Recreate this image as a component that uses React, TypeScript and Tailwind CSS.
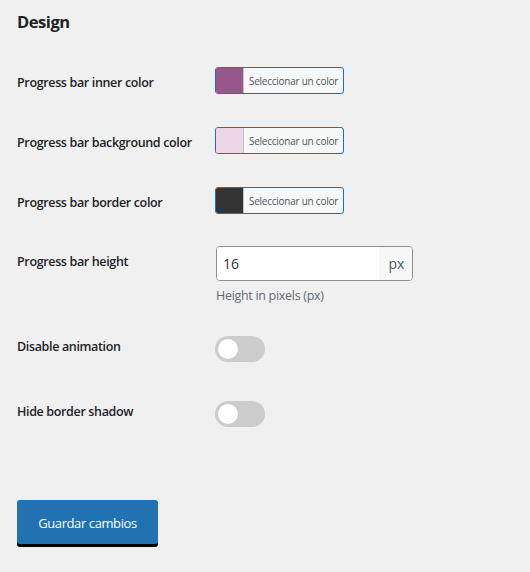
import React from "react";

const font = { fontFamily: '"Open Sans", "Noto Sans", sans-serif' };

function ColorButton({ color }: { color: string }) {
  return (
    <div className="flex h-[27px] w-[129px] overflow-hidden rounded-[3px] border border-[#2271b1] bg-[#f6f7f7]">
      <div className="h-full w-[27px] shrink-0" style={{ backgroundColor: color }} />
      <div className="flex h-full flex-1 items-center border-l border-[#c3c4c7] pl-[5px] text-[10px] leading-none tracking-[-0.25px] text-[#50575e] whitespace-nowrap">
        Seleccionar un color
      </div>
    </div>
  );
}

function Toggle() {
  return (
    <div className="relative h-[26px] w-[50px] rounded-full bg-[#cccccc]">
      <div className="absolute left-[3px] top-[3px] h-[20px] w-[20px] rounded-full bg-white" />
    </div>
  );
}

function Label({ children, pad }: { children: React.ReactNode; pad: string }) {
  return (
    <div className={`w-[198px] shrink-0 text-[12.5px] font-semibold leading-[18px] tracking-[-0.35px] text-[#1d2327] ${pad}`}>
      {children}
    </div>
  );
}

export default function App() {
  return (
    <div className="min-h-[572px] bg-[#f0f0f1] pl-[17px] pt-[12px]" style={font}>
      <h2 className="h-[20px] text-[16.5px] font-bold leading-[20px] tracking-[-0.45px] text-[#1d2327]">Design</h2>

      <div className="mt-[35px] flex h-[60px] items-start">
        <Label pad="pt-[7px]">Progress bar inner color</Label>
        <ColorButton color="#96588a" />
      </div>
      <div className="flex h-[60px] items-start">
        <Label pad="pt-[7px]">Progress bar background color</Label>
        <ColorButton color="#ebd5e6" />
      </div>
      <div className="flex h-[59px] items-start">
        <Label pad="pt-[7px]">Progress bar border color</Label>
        <ColorButton color="#333333" />
      </div>

      <div className="flex h-[90px] items-start">
        <Label pad="pt-[7px]">Progress bar height</Label>
        <div className="ml-px flex flex-col">
          <div className="flex h-[35px] w-[197px] overflow-hidden rounded-[4px] border border-[#8c8f94] bg-white">
            <input
              readOnly
              value="16"
              className="h-full w-[162px] bg-white pl-[6px] text-[14px] text-[#2c3338] outline-none"
              style={font}
            />
            <div className="flex h-full flex-1 items-center justify-center bg-[#f6f7f7] pl-[2px] text-[14px] text-[#50575e]">
              px
            </div>
          </div>
          <div className="mt-[6px] text-[12.5px] leading-[18px] tracking-[-0.3px] text-[#646970]">Height in pixels (px)</div>
        </div>
      </div>

      <div className="flex h-[65px] items-start">
        <Label pad="pt-[2px]">Disable animation</Label>
        <Toggle />
      </div>
      <div className="flex h-[26px] items-start">
        <Label pad="pt-[2px]">Hide border shadow</Label>
        <Toggle />
      </div>

      <button className="mt-[73px] flex h-[44px] w-[141px] items-center justify-center rounded-[3px] bg-[#2271b1] pt-[3px] text-[13px] tracking-[-0.4px] text-white shadow-[0_3px_0_0_#000]">
        Guardar cambios
      </button>
    </div>
  );
}
